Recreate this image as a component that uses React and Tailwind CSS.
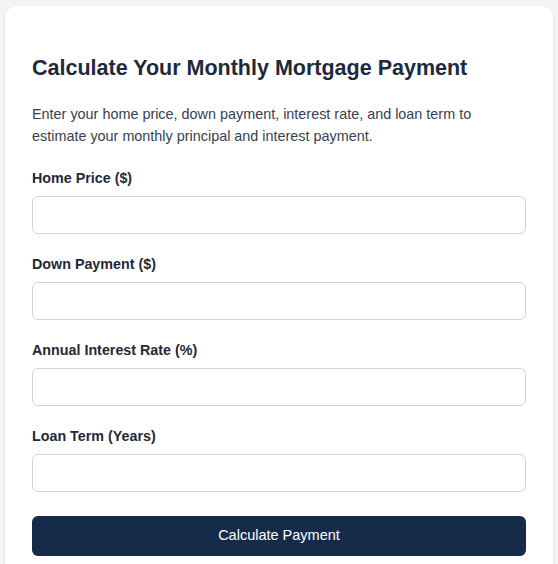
import React from 'react';

const fields = [
  'Home Price ($)',
  'Down Payment ($)',
  'Annual Interest Rate (%)',
  'Loan Term (Years)',
];

const App = () => {
  return (
    <div className="min-h-screen bg-[#f3f4f6] pt-[6px] pl-[5px] pr-[5px] [font-family:'Liberation_Sans',Arial,sans-serif]">
      <div className="bg-white rounded-xl shadow-sm px-[27px] pt-[48px] pb-8">
        {/* Heading */}
        <h2 className="text-[21.5px] leading-[28px] font-bold text-[#1e293b] mb-[21px]">
          Calculate Your Monthly Mortgage Payment
        </h2>
        <p className="text-[14.4px] leading-[22px] text-[#374151] mb-[21px]">
          Enter your home price, down payment, interest rate, and loan term to estimate your monthly principal and interest payment.
        </p>

        {/* Fields */}
        <div className="flex flex-col gap-5">
          {fields.map((label) => (
            <div key={label} className="flex flex-col gap-2">
              <label className="text-[14.3px] leading-5 font-bold text-[#1f2937]">{label}</label>
              <input
                type="text"
                className="h-[38px] w-full rounded-md border border-[#d1d5db] bg-white px-3 text-sm outline-none"
              />
            </div>
          ))}
        </div>

        <button className="mt-[24px] h-[40px] w-full rounded-md bg-[#162a4a] text-white text-[14.5px] font-medium">
          Calculate Payment
        </button>
      </div>
    </div>
  );
};

export default App;
